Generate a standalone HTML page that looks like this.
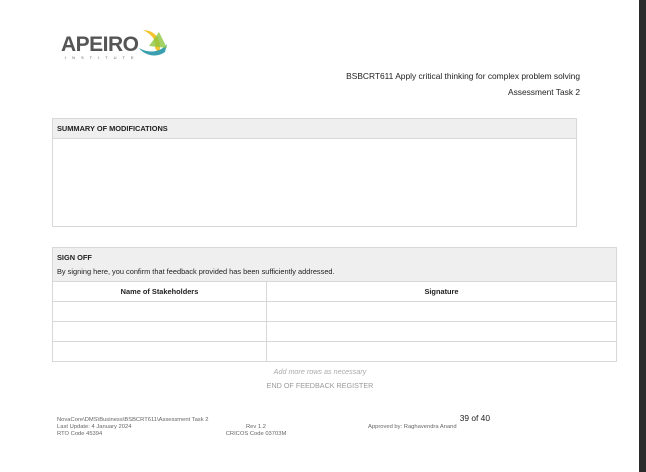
<!DOCTYPE html>
<html><head><style>
body{margin:0;width:646px;height:472px;background:#fff;position:relative;overflow:hidden;font-family:"Liberation Sans",sans-serif;color:#222}
.a{position:absolute}
.bar{left:639px;top:0;width:7px;height:472px;background:#2b2b2b}
.t{font-size:7.4px;color:#222}
.f{font-size:5.8px;color:#666}
</style></head><body>
<div class="a bar"></div>
<div class="a" style="left:61px;top:33px;font-size:21px;font-weight:bold;color:#555;letter-spacing:-0.5px">APEIRO</div>
<div class="a" style="left:65px;top:55px;font-size:4px;color:#666;letter-spacing:6px">INSTITUTE</div>
<svg class="a" style="left:135px;top:24px" width="36" height="36" viewBox="0 0 36 36">
<path d="M8 6 C20 6 28 16 24 30 L20 24 C22 16 16 10 8 6Z" fill="#f4c430"/>
<path d="M4 24 C14 30 26 28 32 20 L30 28 C22 34 10 32 4 24Z" fill="#3aa0b0"/>
<path d="M14 22 L24 8 L32 24 Z" fill="#8cc63f" opacity=".8"/>
</svg>
<div class="a" style="right:66px;top:71px;font-size:8.4px">BSBCRT611 Apply critical thinking for complex problem solving</div>
<div class="a" style="right:66px;top:87px;font-size:8.4px">Assessment Task 2</div>
<div class="a" style="left:52px;top:118px;width:523px;height:107px;border:1px solid #d8d8d8"></div>
<div class="a" style="left:53px;top:119px;width:523px;height:19px;background:#efefef;border-bottom:1px solid #d8d8d8"></div>
<div class="a t" style="left:57px;top:124px;font-weight:bold">SUMMARY OF MODIFICATIONS</div>
<div class="a" style="left:52px;top:247px;width:563px;height:113px;border:1px solid #d8d8d8"></div>
<div class="a" style="left:53px;top:248px;width:563px;height:33px;background:#efefef;border-bottom:1px solid #d8d8d8"></div>
<div class="a t" style="left:57px;top:253px;font-weight:bold">SIGN OFF</div>
<div class="a t" style="left:57px;top:267px">By signing here, you confirm that feedback provided has been sufficiently addressed.</div>
<div class="a" style="left:266px;top:281px;width:1px;height:80px;background:#d8d8d8"></div>
<div class="a" style="left:53px;top:301px;width:563px;height:1px;background:#d8d8d8"></div>
<div class="a" style="left:53px;top:321px;width:563px;height:1px;background:#d8d8d8"></div>
<div class="a" style="left:53px;top:341px;width:563px;height:1px;background:#d8d8d8"></div>
<div class="a t" style="left:53px;width:213px;top:287px;text-align:center;font-weight:bold">Name of Stakeholders</div>
<div class="a t" style="left:267px;width:349px;top:287px;text-align:center;font-weight:bold">Signature</div>
<div class="a" style="left:0;width:640px;top:367px;text-align:center;font-size:7.2px;color:#aaa;font-style:italic">Add more rows as necessary</div>
<div class="a" style="left:0;width:640px;top:381px;text-align:center;font-size:7.2px;color:#999">END OF FEEDBACK REGISTER</div>
<div class="a f" style="left:57px;top:417px">NovaCore\DMS\Business\BSBCRT611\Assessment Task 2</div>
<div class="a f" style="left:57px;top:424px">Last Update: 4 January 2024</div>
<div class="a f" style="left:57px;top:431px">RTO Code 45394</div>
<div class="a f" style="left:216px;width:80px;text-align:center;top:424px">Rev 1.2</div>
<div class="a f" style="left:216px;width:80px;text-align:center;top:431px">CRICOS Code 03703M</div>
<div class="a" style="left:400px;width:90px;text-align:right;top:413px;font-size:8.4px;color:#222">39 of 40</div>
<div class="a f" style="left:368px;top:424px">Approved by: Raghavendra Anand</div>
</body></html>
